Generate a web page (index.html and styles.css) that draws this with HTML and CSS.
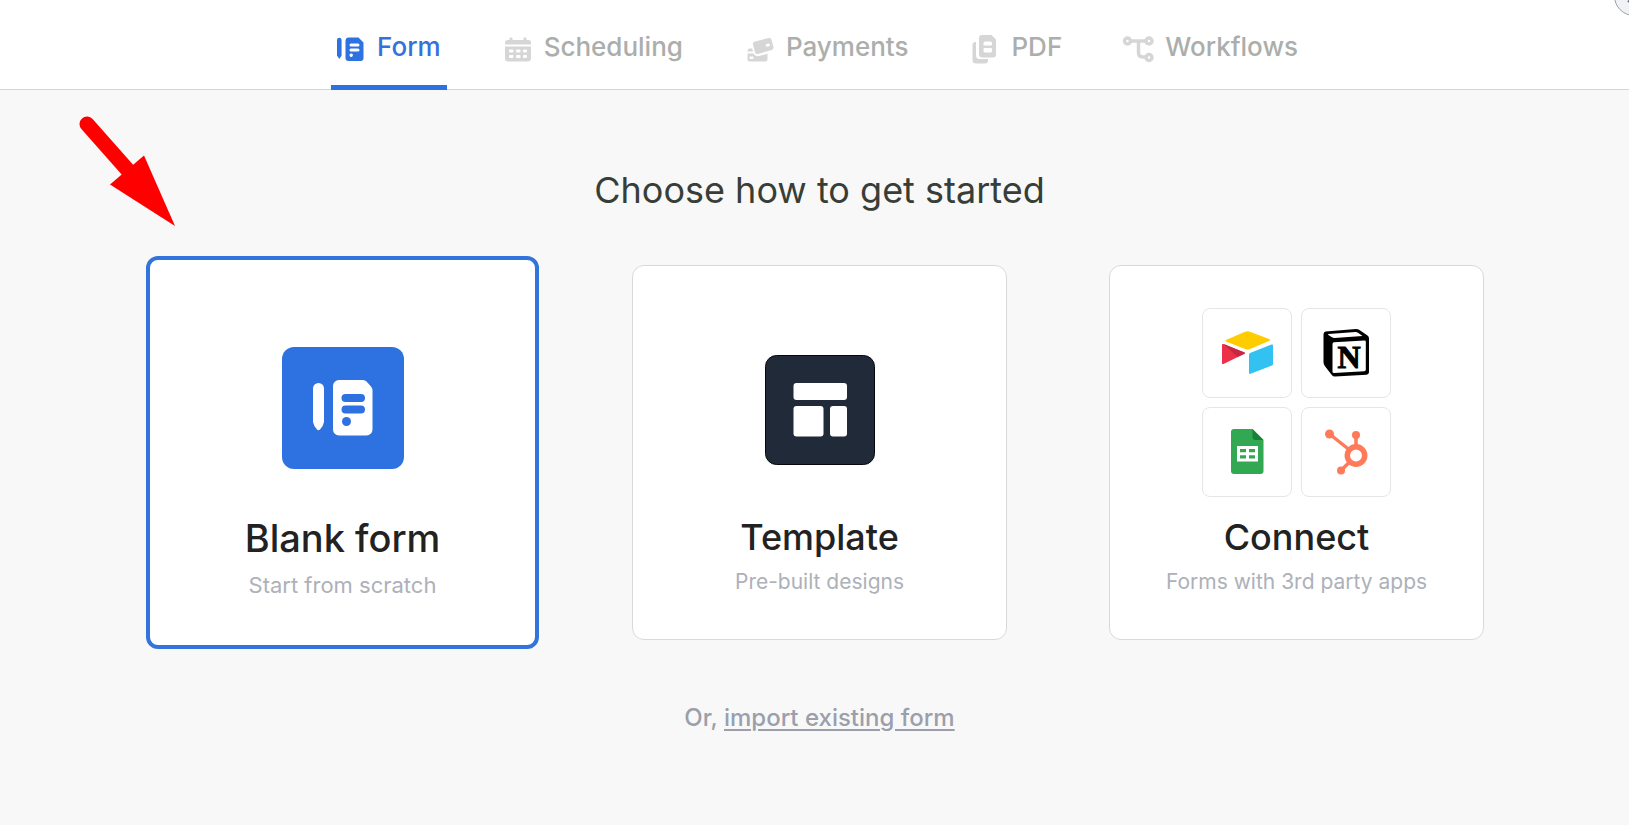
FILE: index.html
```html
<!DOCTYPE html>
<html lang="en">
<head>
<meta charset="utf-8">
<meta name="viewport" content="width=device-width, initial-scale=1">
<title>Choose how to get started</title>
<link rel="stylesheet" href="styles.css">
</head>
<body>
<header class="topbar">
  <nav class="tabs" aria-label="Form type">
    <button class="tab tab-active" type="button">
      <svg class="tab-icon" viewBox="0 0 28 28" aria-hidden="true">
        <path fill="currentColor" d="M0 6a2.3 2.3 0 0 1 4.6 0v15.500L2.300 25 0 21.500z"/>
        <path fill="currentColor" fill-rule="evenodd" d="M11 3.500h10.500l5 5V24a3 3 0 0 1-3 3H11.500a3 3 0 0 1-3-3V6.500a3 3 0 0 1 2.500-3zM14 9.500a1.500 1.500 0 0 0 0 3h7a1.500 1.500 0 0 0 0-3zm0 5a1.500 1.500 0 0 0 0 3h7a1.500 1.500 0 0 0 0-3zm.2 5a1.700 1.700 0 1 0 .01 0z"/>
      </svg>
      <span>Form</span>
    </button>
    <button class="tab" type="button">
      <svg class="tab-icon" viewBox="0 0 28 28" aria-hidden="true">
        <path fill="currentColor" d="M1 10.500V9a3 3 0 0 1 3-3h1.500V4.700a1.500 1.500 0 0 1 3 0V6h11V4.700a1.500 1.500 0 0 1 3 0V6H24a3 3 0 0 1 3 3v1.500z"/>
        <path fill="currentColor" fill-rule="evenodd" d="M1 12.500h26V24a3.500 3.500 0 0 1-3.500 3.500h-19A3.500 3.500 0 0 1 1 24zM6 15.500a1 1 0 0 0-1 1v1a1 1 0 0 0 1 1h2.500a1 1 0 0 0 1-1v-1a1 1 0 0 0-1-1zm7 0a1 1 0 0 0-1 1v1a1 1 0 0 0 1 1h2.500a1 1 0 0 0 1-1v-1a1 1 0 0 0-1-1zm7 0a1 1 0 0 0-1 1v1a1 1 0 0 0 1 1h2a1 1 0 0 0 1-1v-1a1 1 0 0 0-1-1zM6 21a1 1 0 0 0-1 1v1a1 1 0 0 0 1 1h2.500a1 1 0 0 0 1-1v-1a1 1 0 0 0-1-1zm7 0a1 1 0 0 0-1 1v1a1 1 0 0 0 1 1h2.500a1 1 0 0 0 1-1v-1a1 1 0 0 0-1-1zm7 0a1 1 0 0 0-1 1v1a1 1 0 0 0 1 1h2a1 1 0 0 0 1-1v-1a1 1 0 0 0-1-1z"/>
      </svg>
      <span>Scheduling</span>
    </button>
    <button class="tab" type="button">
      <svg class="tab-icon" viewBox="0 0 28 28" aria-hidden="true">
        <path fill="currentColor" fill-rule="evenodd" d="M9 7.500 22.500 4a2.500 2.500 0 0 1 3 1.700L27.500 13a2.500 2.500 0 0 1-1.800 3L12 20a2.500 2.500 0 0 1-3-1.800L7 10.500a2.500 2.500 0 0 1 2-3zM20.500 10a1 1 0 0 0-.7 1.200l.2.800a1 1 0 0 0 1.200.700l2-.500a1 1 0 0 0 .7-1.200l-.2-.800a1 1 0 0 0-1.200-.700z"/>
        <path fill="currentColor" d="M4 14.500h2.200L7 17.500H1.500a2.800 2.800 0 0 1 2.500-3z"/>
        <path fill="currentColor" fill-rule="evenodd" d="M1.500 19.500h6c1 2 3 3 5.500 2.500l8.500-2.300V25a2.500 2.500 0 0 1-2.500 2.500H4A2.500 2.500 0 0 1 1.500 25zM4.500 22.500a1 1 0 0 0-1 1v.5a1 1 0 0 0 1 1H6.500a1 1 0 0 0 1-1v-.5a1 1 0 0 0-1-1z"/>
      </svg>
      <span>Payments</span>
    </button>
    <button class="tab" type="button">
      <svg class="tab-icon" viewBox="0 0 28 28" aria-hidden="true">
        <path fill="currentColor" d="M4.500 8H5v13.500A3.500 3.500 0 0 0 8.500 25H17v1.500a3 3 0 0 1-3 3H5a3.500 3.500 0 0 1-3.500-3.500V11a3 3 0 0 1 3-3z"/>
        <path fill="currentColor" fill-rule="evenodd" d="M11 1h9.500L25 5.500v15a3 3 0 0 1-3 3H11.500a3.500 3.500 0 0 1-3.500-3.500V4a3 3 0 0 1 3-3zM14 7.500a1.500 1.500 0 0 0-1.500 1.500v1.500a1 1 0 0 0 1 1h6.500a1 1 0 0 0 1-1V9a1.500 1.500 0 0 0-1.500-1.500zm-.5 6.500a1 1 0 0 0-1 1v2a1.500 1.500 0 0 0 1.500 1.500h5.500A1.500 1.500 0 0 0 21 17v-2a1 1 0 0 0-1-1z"/>
      </svg>
      <span>PDF</span>
    </button>
    <button class="tab" type="button">
      <svg class="tab-icon" viewBox="0 0 28 28" aria-hidden="true">
        <g fill="none" stroke="currentColor" stroke-width="3.500">
          <circle cx="2.500" cy="7" r="3"/><circle cx="24" cy="7" r="3"/><circle cx="24" cy="23.500" r="3"/>
          <path d="M6 7h14.500M13.500 7v11.500q0 4.500 4.500 4.500h3"/>
        </g>
      </svg>
      <span>Workflows</span>
    </button>
  </nav>
</header>

<button class="close" type="button" aria-label="Close">
  <svg viewBox="0 0 14 14" width="14" height="14" aria-hidden="true"><path d="M1 1l12 12M13 1L1 13" stroke="currentColor" stroke-width="2"/></svg>
</button>

<main class="start">
  <h1 class="heading">Choose how to get started</h1>

  <div class="cards">
    <button class="card card-featured" type="button">
      <span class="media">
        <svg class="tile-large" viewBox="0 0 122 122" aria-hidden="true">
          <rect width="122" height="122" rx="12" fill="#2e72e2"/>
          <path fill="#fff" d="M31 41.500a5.500 5.500 0 0 1 11 0V75q-.5 3.500-4 7.500-1.500 1.500-3 0-3.500-4-4-7.500z"/>
          <path fill="#fff" d="M57 33h24q2 0 3.500 1.500L89 39.500q1.500 1.500 1.500 3.500v39.500a6 6 0 0 1-6 6H57a6 6 0 0 1-6-6V39a6 6 0 0 1 6-6z"/>
          <path d="M63.500 51h15.500M63.500 62.500h15.500" stroke="#2e72e2" stroke-width="8" stroke-linecap="round"/>
          <circle cx="64.500" cy="74.500" r="4.500" fill="#2e72e2"/>
        </svg>
      </span>
      <span class="title">Blank form</span>
      <span class="subtitle">Start from scratch</span>
    </button>

    <button class="card" type="button">
      <span class="media">
        <svg class="tile" viewBox="0 0 110 110" aria-hidden="true">
          <rect x=".5" y=".5" width="109" height="109" rx="11" fill="#202a38" stroke="#05080d"/>
          <g fill="#fff"><rect x="28.500" y="28" width="53.500" height="17" rx="3"/><rect x="28.500" y="51" width="30" height="30.500" rx="3"/><rect x="65" y="51" width="17" height="30.500" rx="3"/></g>
        </svg>
      </span>
      <span class="title">Template</span>
      <span class="subtitle">Pre-built designs</span>
    </button>

    <button class="card" type="button">
      <span class="media media-apps">
        <span class="app">
          <svg viewBox="0 0 88 88" role="img" aria-label="Airtable">
            <path fill="#fc0" d="M23 31 42 22.800q2.500-1 5 0l19 7.200q2 1 0 2L47 40q-2.500 1-5 0L23 32.500q-1.500-.8 0-1.500z"/>
            <path fill="#31c2f2" d="M47 44 68.500 35.500q1.500-.5 1.500 1V55q0 1-1 1.500L47.500 64.800q-1.500.5-1.500-1V45.500q0-1 1-1.500z"/>
            <path fill="#ed3049" d="M19 36q0-1.500 1.500-1L41.500 43.500q1 .7 0 1.300L20.500 55q-1.500.5-1.500-1z"/>
            <path fill="#c62842" d="M20.500 35 41.500 43.500q1 .7 0 1.300L34.500 48z"/>
          </svg>
        </span>
        <span class="app">
          <svg viewBox="0 0 88 88" role="img" aria-label="Notion">
            <path d="M23.500 22.500 54 20q2 0 3.500 1L65.500 26.500q1.500 1 1.500 3v33.500q0 2.500-2.500 2.700L33 67.500q-2 0-3.200-1.500l-7-9q-1.300-1.700-1.300-4V25.500q0-2.500 2-3z"/>
            <path fill="#fff" d="M26.500 25 53.500 23q1.500 0 2.500.7l4.500 3.300L32.500 29q-1.500 0-2.500-.8l-4-2.400z"/>
            <path fill="#fff" d="M32 33.300 62.500 31.500q1.300 0 1.300 1.300V60.500q0 1.700-1.500 1.800L32 64q-1.500 0-1.500-1.500V35q0-1.600 1.500-1.700z"/>
            <text x="47" y="59" text-anchor="middle" class="notion-letter">N</text>
          </svg>
        </span>
        <span class="app">
          <svg viewBox="0 0 88 88" role="img" aria-label="Google Sheets">
            <path fill="#33a853" d="M31 21h18.500L60.500 32V63a3 3 0 0 1-3 3H31a3 3 0 0 1-3-3V24a3 3 0 0 1 3-3z"/>
            <path fill="#188038" d="M49.500 21 60.500 32H52.500a3 3 0 0 1-3-3z"/>
            <path fill="#fff" fill-rule="evenodd" d="M34 38h21v15.500H34zM37 41v3.300h6V41zm9 0v3.300h6V41zm-9 6.300v3.200h6v-3.200zm9 0v3.200h6v-3.200z"/>
          </svg>
        </span>
        <span class="app">
          <svg viewBox="0 0 88 88" role="img" aria-label="HubSpot">
            <g fill="#ff7a59"><circle cx="27.500" cy="26" r="4.500"/><circle cx="54" cy="27" r="4"/><circle cx="39" cy="62.500" r="4"/></g>
            <path fill="none" stroke="#ff7a59" stroke-width="3.500" d="M27.500 26 47 41.500M54 27v12M39 62.500l8-8"/>
            <circle cx="54" cy="47.500" r="8.700" fill="#fff" stroke="#ff7a59" stroke-width="5.500"/>
          </svg>
        </span>
      </span>
      <span class="title">Connect</span>
      <span class="subtitle">Forms with 3rd party apps</span>
    </button>
  </div>

  <p class="import">Or, <a href="#import">import existing form</a></p>
</main>

<svg class="pointer" viewBox="0 0 100 114" aria-hidden="true">
  <path d="M8 8 54 60" stroke="#f00" stroke-width="15" stroke-linecap="round"/>
  <path d="M65 39.500 96 110 31 68.500z" fill="#f00"/>
</svg>
</body>
</html>
```
FILE: styles.css
```css
* {
  box-sizing: border-box;
}

body {
  position: relative;
  min-height: 100vh;
  margin: 0;
  overflow-x: hidden;
  background: #f8f8f8;
  color: #222;
  font-family: Inter, "Liberation Sans", sans-serif;
}

button {
  margin: 0;
  border: 0;
  background: none;
  color: inherit;
  font: inherit;
  cursor: pointer;
}

.topbar {
  padding-left: 6px;
  border-bottom: 1px solid #d5d5d5;
  background: #fff;
}

.tabs {
  display: flex;
  justify-content: center;
  gap: 51px;
  margin-bottom: -1px;
}

.tab {
  display: flex;
  align-items: center;
  gap: 12px;
  padding: 31px 6px 22px;
  border-bottom: 5px solid transparent;
  color: #abaeab;
  font-size: 26px;
  font-weight: 500;
  line-height: 32px;
}

.tab-active {
  border-bottom-color: #2e72e2;
  color: #3571da;
}

.tab-icon {
  width: 28px;
  height: 28px;
  margin-top: 2px;
  overflow: visible;
  color: #d6d6d6;
}

.tab-active .tab-icon {
  color: #2e72e2;
}

.close {
  position: absolute;
  top: -24px;
  right: -25px;
  display: grid;
  place-items: center;
  width: 40px;
  height: 40px;
  padding: 0;
  border: 1px solid #9a9ea9;
  border-radius: 50%;
  background: #f0f2f6;
  color: #6c7385;
}

.start {
  display: flex;
  flex-direction: column;
  align-items: center;
  padding: 78px 0 40px 10px;
}

.heading {
  margin: 0 0 53px;
  color: #373e37;
  font-size: 36px;
  font-weight: 400;
  line-height: 44px;
}

.cards {
  display: grid;
  grid-template-columns: repeat(3, 375px);
  gap: 102px;
}

.card {
  display: flex;
  flex-direction: column;
  align-items: center;
  justify-content: flex-start;
  min-height: 375px;
  padding: 42px 24px;
  border: 1px solid #d9d9d9;
  border-radius: 12px;
  background: #fff;
}

.card-featured {
  margin: -9px;
  border: 4px solid #3373dc;
}

.media {
  display: grid;
  place-items: center;
  height: 204px;
  margin-bottom: 3px;
}

.card-featured .media {
  height: 212px;
  margin-bottom: 1px;
}

.tile {
  width: 110px;
  height: 110px;
}

.tile-large {
  width: 122px;
  height: 122px;
}

.media-apps {
  grid-template-columns: repeat(2, 90px);
  grid-auto-rows: 90px;
  gap: 9px;
}

.app {
  width: 90px;
  height: 90px;
  border: 1px solid #e6e6e6;
  border-radius: 8px;
}

.app svg {
  display: block;
}

.notion-letter {
  stroke: #000;
  stroke-width: 1px;
  font-family: "Liberation Serif", serif;
  font-size: 32px;
  font-weight: 700;
}

.title {
  font-size: 36px;
  font-weight: 500;
  line-height: 44px;
}

.subtitle {
  margin-top: 9px;
  color: #adb1b9;
  font-size: 21px;
  line-height: 28px;
}

.card-featured .title {
  font-size: 38px;
  line-height: 46px;
}

.card-featured .subtitle {
  margin-top: 10px;
  font-size: 22px;
}

.import {
  margin: 62px 0 0;
  color: #9b9fab;
  font-size: 24px;
  font-weight: 500;
  line-height: 32px;
}

.import a {
  color: inherit;
  text-decoration-thickness: 2px;
  text-underline-offset: 3px;
}

.pointer {
  position: absolute;
  top: 116px;
  left: 79px;
  width: 100px;
  height: 114px;
}
```
